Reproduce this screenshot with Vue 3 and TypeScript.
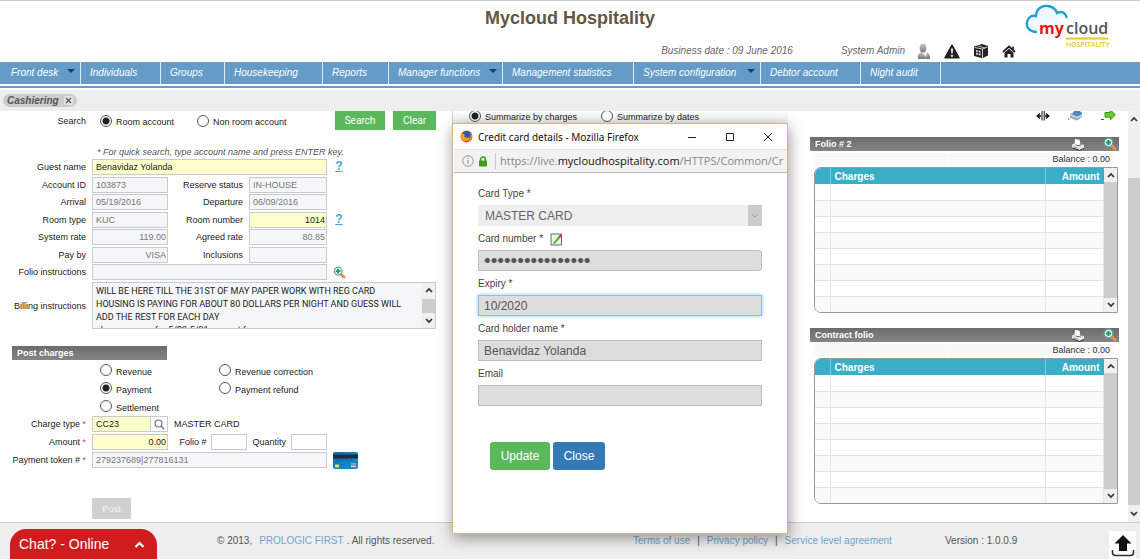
<script setup lang="ts">
import { ref } from 'vue'

interface NavItem { label: string; width: number; menu?: boolean }

const nav: NavItem[] = [
  { label: 'Front desk', width: 81, menu: true },
  { label: 'Individuals', width: 80 },
  { label: 'Groups', width: 64 },
  { label: 'Housekeeping', width: 98 },
  { label: 'Reports', width: 66 },
  { label: 'Manager functions', width: 114, menu: true },
  { label: 'Management statistics', width: 131 },
  { label: 'System configuration', width: 127, menu: true },
  { label: 'Debtor account', width: 100 },
  { label: 'Night audit', width: 80 },
]

const accountKind = ref('room')
const summary = ref('charges')
const postKind = ref('payment')
const postKinds = [
  { id: 'revenue', label: 'Revenue' },
  { id: 'correction', label: 'Revenue correction' },
  { id: 'payment', label: 'Payment' },
  { id: 'refund', label: 'Payment refund' },
  { id: 'settlement', label: 'Settlement' },
]
const details = [
  [
    { id: 'account', label: 'Account ID', value: '103873', cls: '' },
    { id: 'reserve', label: 'Reserve status', value: 'IN-HOUSE', cls: '' },
  ],
  [
    { id: 'arrival', label: 'Arrival', value: '05/19/2016', cls: '' },
    { id: 'departure', label: 'Departure', value: '06/09/2016', cls: '' },
  ],
  [
    { id: 'roomtype', label: 'Room type', value: 'KUC', cls: '' },
    { id: 'roomno', label: 'Room number', value: '1014', cls: 'num key' },
  ],
  [
    { id: 'sysrate', label: 'System rate', value: '119.00', cls: 'num' },
    { id: 'agreed', label: 'Agreed rate', value: '80.85', cls: 'num' },
  ],
  [
    { id: 'payby', label: 'Pay by', value: 'VISA', cls: 'num' },
    { id: 'inclusions', label: 'Inclusions', value: '', cls: '' },
  ],
]
const billing = `WILL BE HERE TILL THE 31ST OF MAY PAPER WORK WITH REG CARD
HOUSING IS PAYING FOR ABOUT 80 DOLLARS PER NIGHT AND GUESS WILL
ADD THE REST FOR EACH DAY
charges came for 5/29-5/31 exempt for`
const folios = ['Folio # 2', 'Contract folio']
</script>

<template>
  <div class="page">
    <svg class="defs" aria-hidden="true">
      <defs>
        <linearGradient id="grey" x1="0" y1="0" x2="0" y2="1"><stop offset="0" stop-color="#c9c9c9" /><stop offset="1" stop-color="#777" /></linearGradient>
        <linearGradient id="blue" x1="0" y1="0" x2="1" y2="1"><stop offset="0" stop-color="#0f6cb0" /><stop offset="1" stop-color="#1593cf" /></linearGradient>
        <symbol id="chev-up" viewBox="0 0 8 6"><path d="M1 5 4 2 7 5" fill="none" stroke="#333" stroke-width="1.7" /></symbol>
        <symbol id="chev-down" viewBox="0 0 8 6"><path d="M1 1 4 4 7 1" fill="none" stroke="#333" stroke-width="1.7" /></symbol>
        <symbol id="zoom-in" viewBox="0 0 14 14">
          <path d="m8 8 4 4" stroke="#e5963a" stroke-width="3" stroke-linecap="round" />
          <circle cx="5.500" cy="5.500" r="4.300" fill="#d9f3ea" stroke="#6f9cab" stroke-width="1.200" />
          <path d="M5.500 3v5M3 5.500h5" stroke="#1f9d45" stroke-width="2" />
        </symbol>
        <symbol id="printer" viewBox="0 0 14 13">
          <path d="m1 6.500 4-1.500 8 2v3L8.500 12 1 9.500z" fill="#e4e4e4" />
          <path d="m3.500 6.500.5-5.500 4.500.8 1 5-3 1z" fill="#fff" />
          <path d="m4.500 6.800 2.500.9 3.500-1" fill="none" stroke="#555" stroke-width=".9" />
          <path d="m1.500 10 7 2.400L13 10.500" fill="none" stroke="#3d3d3d" />
          <path d="m2.500 8.800 4.500 1.500" stroke="#8a8a8a" stroke-width=".8" />
        </symbol>
      </defs>
    </svg>

    <header class="top">
      <h1>Mycloud Hospitality</h1>
      <div class="top-right">
        <div class="status">
          <span class="date">Business date : 09 June 2016</span>
          <span class="admin">System Admin</span>
          <svg width="14" height="17" viewBox="0 0 14 17">
            <path d="M1 16c-.8-4 .8-6.500 4-7h4c3 .5 4.500 3 4 7z" fill="url(#grey)" />
            <ellipse cx="6" cy="5" rx="3.300" ry="4.500" fill="url(#grey)" />
            <path d="M5 9.500 9 14l1-5" fill="#eee" />
          </svg>
          <svg class="gap" width="16" height="15" viewBox="0 0 16 15">
            <path d="M8 1.200 15 13.800H1z" fill="#222" stroke="#222" stroke-width="1.500" stroke-linejoin="round" />
            <path d="M7 4.500h2l-.4 5H7.400z" fill="#fff" /><circle cx="8" cy="11.800" r="1.100" fill="#fff" />
          </svg>
          <svg class="gap" width="16" height="16" viewBox="0 0 16 16">
            <path d="m1 3.500 8-2.500 6 2v9.500l-5.500 2.800L1 13z" fill="#222" />
            <path d="M1.500 4.500 9.500 6 14.500 4M9.500 6v9" fill="none" stroke="#ddd" stroke-width=".9" />
            <path d="M4.500 2.800 12 5" stroke="#ddd" stroke-width=".8" />
            <path d="M3 7v4.500l4.500 1V8z" fill="#ddd" /><path d="M3 9.300l4.500.8M5.200 7v5.500" fill="none" stroke="#222" stroke-width=".9" />
          </svg>
          <svg class="gap" width="14" height="13" viewBox="0 0 14 13">
            <path d="M1 7 7 1.500 13 7M11 1.500v3" fill="none" stroke="#222" stroke-width="1.700" />
            <path d="m2.500 7.800 4.500-4 4.500 4V12.500H8.500V9h-3v3.500h-3z" fill="#222" />
          </svg>
        </div>
        <svg class="logo" width="86" height="46" viewBox="0 0 86 46">
          <path d="M11 29C4 28.500 1 24 2 19s5-7 9-6c0-7 6-11 12-10 5 1 8 3 9 7 4-2 8-1 9.500 4" fill="#eef8fd" stroke="#1ea0dc" stroke-width="2.400" stroke-linecap="round" />
          <text x="14" y="31" class="logo-my">my</text>
          <text x="41" y="31" class="logo-cloud">cloud</text>
          <path d="M41 35.500h42" stroke="#f6c21c" stroke-width="2" />
          <text x="41" y="44" class="logo-sub">HOSPITALITY</text>
        </svg>
      </div>
    </header>

    <nav class="nav">
      <a v-for="n in nav" :key="n.label" href="#" :style="{ width: n.width + 'px' }">
        {{ n.label }}<i v-if="n.menu" class="caret"></i>
      </a>
    </nav>
    <div class="tabs">
      <span class="tab">Cashiering
        <button type="button" aria-label="Close tab">
          <svg width="9" height="9" viewBox="0 0 9 9"><path d="m2 2 5 5m0-5-5 5" stroke="#555" stroke-width="1.200" /></svg>
        </button>
      </span>
    </div>

    <main class="main">
      <section class="left">
        <div class="searchrow">
          <span class="search-label">Search</span>
          <label class="opt"><input v-model="accountKind" type="radio" name="acc" value="room" /><span>Room account</span></label>
          <label class="opt"><input v-model="accountKind" type="radio" name="acc" value="non" /><span>Non room account</span></label>
          <div class="search-buttons">
            <button type="button" class="go wide">Search</button>
            <button type="button" class="go">Clear</button>
          </div>
        </div>
        <p class="hint">* For quick search, type account name and press ENTER key.</p>

        <div class="grid">
          <label for="guest">Guest name</label>
          <input id="guest" class="key long dark" value="Benavidaz Yolanda" />
          <a class="help" href="#">?</a>
          <template v-for="(row, i) in details" :key="i">
            <template v-for="f in row" :key="f.id">
              <label :for="f.id">{{ f.label }}</label>
              <input :id="f.id" :class="f.cls" :value="f.value" />
            </template>
            <a v-if="i === 2" class="help" href="#">?</a>
            <span v-else></span>
          </template>
          <label for="folio-i">Folio instructions</label>
          <input id="folio-i" class="long" value="" />
          <svg class="mag" width="13" height="13"><use href="#zoom-in" /></svg>
        </div>
        <div class="billing">
          <label for="billing">Billing instructions</label>
          <div class="memo">
            <textarea id="billing" :value="billing" wrap="off"></textarea>
            <div class="bar">
              <svg width="8" height="6"><use href="#chev-up" /></svg>
              <i class="thumb"></i>
              <svg width="8" height="6"><use href="#chev-down" /></svg>
            </div>
          </div>
        </div>

        <h2 class="strip post-title">Post charges</h2>
        <div class="kinds">
          <label v-for="k in postKinds" :key="k.id" class="opt">
            <input v-model="postKind" type="radio" name="post" :value="k.id" /><span>{{ k.label }}</span>
          </label>
        </div>
        <div class="grid post">
          <label for="ctype">Charge type <b>*</b></label>
          <div class="combo">
            <input id="ctype" class="key dark" value="CC23" />
            <button type="button" aria-label="Find charge type">
              <svg width="11" height="11" viewBox="0 0 11 11"><circle cx="4.500" cy="4.500" r="3.500" fill="none" stroke="#777" stroke-width="1.200" /><path d="m7 7 3.200 3.200" stroke="#777" stroke-width="1.500" /></svg>
            </button>
          </div>
          <span class="card-name">MASTER CARD</span>
          <span></span>
          <label for="amount">Amount <b>*</b></label>
          <input id="amount" class="key num" value="0.00" />
          <div class="pair">
            <label for="folio">Folio #</label><input id="folio" class="plain" value="" />
            <label for="qty">Quantity</label><input id="qty" class="plain" value="" />
          </div>
          <span></span>
          <label for="token">Payment token # <b>*</b></label>
          <input id="token" class="long" value="279237689|277816131" />
          <svg width="25" height="17" viewBox="0 0 25 17">
            <rect width="25" height="17" rx="2" fill="url(#blue)" />
            <path d="M0 2.500h25v4H0z" fill="#1d2c3b" />
            <path d="M3 8h18" stroke="#0b5288" stroke-width=".8" stroke-dasharray="2 1" />
            <path d="M2 12.500h4v3H2z" fill="#d8ee4a" /><path d="M18 11.500h5v3.500h-5z" fill="#d8cfdc" /><path d="M18 13h5" stroke="#6b4f74" />
          </svg>
        </div>
        <button type="button" class="post-btn" disabled>Post</button>
      </section>

      <section class="middle">
        <div class="sumrow">
          <label class="opt"><input v-model="summary" type="radio" name="sum" value="charges" /><span>Summarize by charges</span></label>
          <label class="opt"><input v-model="summary" type="radio" name="sum" value="dates" /><span>Summarize by dates</span></label>
        </div>
      </section>

      <section class="right">
        <div class="tools">
          <svg width="14" height="10" viewBox="0 0 14 10"><path d="M5 5H1m3-2.500L1.200 5 4 7.500M9 5h4m-3-2.500L12.800 5 10 7.500" fill="none" stroke="#111" stroke-width="1.400" /><path d="M6 0v9.500M8.300 0v9.500" stroke="#555" stroke-width="1.400" /></svg>
          <svg width="15" height="10" viewBox="0 0 15 10"><path d="m2 3.500 4-3 8 .5v4.500L9 9.500 2 7z" fill="#9aa9b6" /><path d="m6 0 6 0 2 3.500L9 5.500 5 3z" fill="#4a88c8" /><path d="m2 4 7 2.500L14 4" fill="none" stroke="#e6ecf2" /><path d="M0 8h1.500" stroke="#555" /></svg>
          <svg width="15" height="10" viewBox="0 0 15 10"><path d="M4 1.500h5V0h1.500l4 3.800L9.500 8.800V6.200H4z" fill="#5fce2a" stroke="#2c8a12" stroke-width=".9" /><path d="M0 8.500h3" stroke="#555" /></svg>
        </div>
        <article v-for="title in folios" :key="title" class="folio">
          <h2 class="strip">
            <span>{{ title }}</span>
            <svg width="14" height="13"><use href="#printer" /></svg>
            <svg width="14" height="14"><use href="#zoom-in" /></svg>
          </h2>
          <div class="balance"><span></span><span>Balance : 0.00</span></div>
          <div class="tablebox">
            <table>
              <thead><tr><th class="pick"></th><th>Charges</th><th class="amt">Amount</th></tr></thead>
              <tbody><tr v-for="r in 8" :key="r"><td></td><td></td><td></td></tr></tbody>
            </table>
            <div class="bar">
              <svg width="8" height="6"><use href="#chev-up" /></svg>
              <i class="thumb"></i>
              <svg width="8" height="6"><use href="#chev-down" /></svg>
            </div>
          </div>
        </article>
      </section>

      <div class="bar pagebar">
        <svg width="8" height="6"><use href="#chev-up" /></svg>
        <i class="thumb"></i>
        <svg width="8" height="6"><use href="#chev-down" /></svg>
      </div>
    </main>

    <footer class="foot">
      <button type="button" class="chat"><span>Chat? - Online</span>
        <svg width="11" height="7" viewBox="0 0 11 7"><path d="m1.500 6 4-4 4 4" fill="none" stroke="#fff" stroke-width="2.200" /></svg>
      </button>
      <p class="copy"><span>© 2013,</span><a href="#">PROLOGIC FIRST</a><span>. All rights reserved.</span></p>
      <p class="links"><a href="#">Terms of use</a><span>|</span><a href="#">Privacy policy</a><span>|</span><a href="#">Service level agreement</a></p>
      <span class="version">Version : 1.0.0.9</span>
      <button type="button" class="totop" aria-label="Back to top">
        <svg width="24" height="24" viewBox="0 0 24 24"><path d="m12 2 8.500 8.500H16V18H8v-7.500H3.500z" fill="#111" /><path d="M1.500 17v2.500q0 3 3 3h15q3 0 3-3V17" fill="none" stroke="#333" stroke-width="1.600" /></svg>
      </button>
    </footer>

    <div class="window" role="dialog" aria-label="Credit card details">
      <div class="titlebar">
        <svg width="13" height="13" viewBox="0 0 13 13">
          <circle cx="6.500" cy="6.500" r="6" fill="#e2601b" /><circle cx="7" cy="5" r="4" fill="#2a5ca8" />
          <path d="M1 3.500c1 1 3-.5 4 1.500-1 .5-1 2 .5 2.500 1.500.5 3-.5 4 .5-1 3-5 4-7.500 1.500C.5 7.500.6 5 1 3.500z" fill="#f7a21b" />
          <path d="M10.500 3c2 3 1 7-2.500 8.500 2-1.500 3.500-4.500 2.500-8.500z" fill="#ffd03c" />
        </svg>
        <span>Credit card details - Mozilla Firefox</span>
        <button type="button" aria-label="Minimize"><svg width="10" height="10"><path d="M1 5.500h8" stroke="#222" /></svg></button>
        <button type="button" aria-label="Maximize"><svg width="10" height="10"><path d="M1.500 1.500h7v7h-7z" fill="none" stroke="#222" /></svg></button>
        <button type="button" aria-label="Close window"><svg width="10" height="10"><path d="m1 1 8 8m0-8-8 8" stroke="#222" /></svg></button>
      </div>
      <div class="urlbar">
        <svg width="12" height="12" viewBox="0 0 12 12"><circle cx="6" cy="6" r="5.300" fill="none" stroke="#999" /><path d="M6 5v4M6 2.800v1.200" stroke="#888" /></svg>
        <svg width="10" height="11" viewBox="0 0 10 11"><path d="M2.500 5V3.500a2.500 2.500 0 0 1 5 0V5" fill="none" stroke="#3f9b1e" stroke-width="1.500" /><rect x="1" y="4.500" width="8" height="6" rx=".8" fill="#3f9b1e" /></svg>
        <span class="url">https://live.<b>mycloudhospitality.com</b>/HTTPS/Common/Cr</span>
      </div>
      <form class="card" @submit.prevent>
        <label for="ctype2">Card Type *</label>
        <div class="selectbox">
          <select id="ctype2"><option>MASTER CARD</option></select>
          <span><svg width="8" height="6" viewBox="0 0 8 6"><path d="m1 1 3 3 3-3" fill="none" stroke="#999" /></svg></span>
        </div>
        <label for="cnum">Card number *
          <svg width="13" height="13" viewBox="0 0 13 13"><path d="M1 1h10.500v11H1z" fill="#eaf5ea" stroke="#5d6f7c" /><path d="m3.500 9.500 5-6 1.500 1.500-5 5.500-2 .5z" fill="#46b335" /><path d="m8.500 3.500 2-2.500 1.500 1.500L10 5z" fill="#c8382c" /></svg>
        </label>
        <input id="cnum" type="password" value="5412751234567890" class="rounded" autocomplete="off" />
        <label for="expiry">Expiry *</label>
        <input id="expiry" value="10/2020" class="active" />
        <label for="holder">Card holder name *</label>
        <input id="holder" value="Benavidaz Yolanda" />
        <label for="email">Email</label>
        <input id="email" value="" />
        <div class="actions">
          <button type="submit" class="update">Update</button>
          <button type="button" class="close">Close</button>
        </div>
      </form>
    </div>
  </div>
</template>

<style>
body { background: #fff; }
</style>

<style scoped>
* { box-sizing: border-box; }
.page { position: relative; display: flex; flex-direction: column; min-height: 100vh; overflow: hidden; font: 9px/12px "Liberation Sans", Arial, sans-serif; color: #222; }
.defs { position: absolute; width: 0; height: 0; }
h1, h2, p { margin: 0; }
svg { display: block; flex: none; }
a { color: #6fa5cf; text-decoration: none; }
button { font: inherit; border: 0; padding: 0; margin: 0; }
input, textarea, select { font: inherit; margin: 0; min-width: 0; }

.top { display: grid; grid-template-columns: 1fr auto 1fr; height: 62px; border-top: 1px solid #ccc; }
.top h1 { grid-column: 2; font-size: 18px; line-height: 22px; padding-top: 6px; color: #655643; }
.top-right { display: flex; justify-content: flex-end; align-items: flex-start; padding-right: 29px; }
.status { display: flex; align-items: center; height: 20px; margin-top: 40px; font-size: 10px; font-style: italic; color: #666; white-space: nowrap; }
.date { margin-right: 48px; }
.admin { margin-right: 12px; }
.gap { margin-left: 13px; }
.logo { margin: 2px 0 0 9px; }
.logo-my { font: bold 16px "Open Sans", sans-serif; fill: #e3171f; }
.logo-cloud { font: 600 16px "Open Sans", sans-serif; fill: #555; }
.logo-sub { font: 600 7px "Open Sans", sans-serif; fill: #f6c21c; }

.nav { display: flex; height: 22px; background: #649bc7; }
.nav a { display: flex; justify-content: space-between; padding: 0 5px 0 9px; border-right: 1px solid #dfeaf4; color: #fff; font-size: 10px; font-style: italic; line-height: 22px; white-space: nowrap; flex: none; }
.nav a:first-child { padding-left: 11px; }
.caret { margin-top: 7px; width: 0; height: 0; border: 4px solid transparent; border-top-color: #0c3f86; border-bottom: 0; }
.tabs { margin-top: 2px; border-top: 2px solid #649bc7; height: 25px; padding: 6px 3px 0; background: linear-gradient(#fff 2px, #eee 2px); display: flex; align-items: flex-start; }
.tab { display: flex; align-items: center; gap: 5px; height: 13px; padding: 0 4px; border-radius: 7px; background: #ccc; font: italic bold 10px/13px "Liberation Sans", Arial, sans-serif; color: #555; }
.tab button { background: #e4e4e4; border-radius: 2px; }

.main { flex: 1; display: grid; grid-template-columns: 452px 1fr 340px 12px; }
.left { padding-bottom: 3px; }
.opt { display: flex; align-items: center; gap: 4px; color: #222; white-space: nowrap; }
.opt span { padding-top: 3px; }
.opt input { appearance: none; width: 12px; height: 12px; border: 1px solid #555; border-radius: 50%; background: #fff; flex: none; }
.opt input:checked { background: radial-gradient(circle, #222 0 3px, #fff 4px); }
.searchrow { display: grid; grid-template-columns: 86px 97px 152px auto; height: 19px; align-items: center; }
.search-label { text-align: right; }
.searchrow .opt { margin-left: 14px; }
.search-buttons { display: flex; gap: 8px; }
.go { width: 43px; height: 19px; background: #5cb85c; color: #fff; font-size: 10px; font-family: Roboto, sans-serif; }
.go.wide { width: 50px; }
.hint { margin-top: 16px; padding-left: 97px; height: 13px; font-style: italic; color: #555; line-height: 13px; }

.grid { display: grid; grid-template-columns: 86px 76px 69px 78px auto; grid-template-rows: repeat(3, 18px 17px) 18px; column-gap: 6px; align-items: start; }
.grid label, .billing label { text-align: right; line-height: 16px; white-space: nowrap; }
.grid input { width: 100%; height: 16px; padding: 0 3px; border: 1px solid #c5cbd0; border-radius: 0; background: #f5f6f8; color: #777; }
.grid .long { grid-column: 2 / 5; }
.grid .dark { color: #222; }
.grid .num { text-align: right; padding-right: 1px; }
.grid .key { background: #ffffcb; color: #222; }
.grid .plain { background: #fff; width: 36px; }
.help { font: bold 12px/14px "Liberation Sans", Arial, sans-serif; color: #45a5d6; text-decoration: underline; width: 12px; text-align: center; }
.mag { margin-top: 2px; }
.billing { display: grid; grid-template-columns: 86px 344px; column-gap: 6px; align-items: center; }
.memo { display: flex; height: 47px; border: 1px solid #c5cbd0; background: #f5f6f8; }
.memo textarea { flex: 1; resize: none; border: 0; padding: 2px 3px 0; overflow: hidden; background: transparent; font: 9px/13px Roboto, "Liberation Sans", sans-serif; color: #222; white-space: pre; }
.bar { display: flex; flex-direction: column; align-items: center; justify-content: space-between; width: 13px; background: #f0f0f0; padding: 4px 0; }
.bar .thumb { width: 100%; height: 14px; background: #cdcdcd; }

.strip { display: flex; align-items: center; height: 14px; padding: 0 2px 0 5px; background: linear-gradient(#6c6c6c, #858585); color: #fff; font-size: 9px; line-height: 14px; }
.post-title { width: 155px; margin: 17px 0 0 12px; }
.kinds { display: grid; grid-template-columns: 119px auto; grid-auto-rows: 18px; justify-content: start; padding: 1px 0 1px 100px; }
.post { grid-template-rows: 18px 18px 18px; }
.post b { color: #e33; font-weight: normal; }
.post .pair { grid-column: 3 / 5; display: flex; gap: 5px; justify-content: flex-end; }
.post .card-name { grid-column: 3 / 5; line-height: 16px; }
.combo { display: flex; }
.combo button { width: 17px; flex: none; height: 16px; border: 1px solid #c5cbd0; border-left: 0; background: #fff; display: grid; place-items: center; }
.post-btn { margin: 28px 0 0 92px; width: 39px; height: 21px; background: #d0d0d0; color: #f5f5f5; }

.middle { border-left: 1px solid #ccc; }
.sumrow { display: flex; align-items: flex-end; gap: 24px; height: 12px; overflow: hidden; padding-left: 16px; background: linear-gradient(#fff, #eee); }
.sumrow .opt { flex: none; height: 15px; }

.right { padding: 0 9px 0 22px; }
.tools { display: flex; justify-content: flex-end; gap: 18px; height: 26px; padding-right: 3px; }
.folio + .folio { margin-top: 15px; }
.strip span { flex: 1; }
.folio .strip svg + svg { margin-left: 18px; }
.balance { display: flex; justify-content: space-between; margin: 2px 5px; height: 12px; background: #f8f8f8; padding-right: 4px; color: #333; }
.balance span:first-child { width: 134px; border-right: 1px solid #fff; }
.tablebox { display: flex; margin: 0 1px 0 4px; border: 1px solid #999; border-radius: 7px 0 0 7px; overflow: hidden; }
table { flex: 1; border-collapse: collapse; table-layout: fixed; }
th { height: 16px; padding: 0 4px; background: #39aec6; color: #fff; text-align: left; font: bold 10px/15px "Liberation Sans", Arial, sans-serif; border-right: 1px solid #7ecbda; }
th.pick { width: 15px; }
th.amt { width: 58px; text-align: right; border-right: 0; }
td { height: 16px; padding: 0; border-right: 1px solid #e6e6e6; border-bottom: 1px solid #e2e2e2; }
tr:last-child td { border-bottom: 0; }
tbody tr:nth-child(even) { background: #fafafa; }
.tablebox .thumb, .pagebar .thumb { flex: 1; margin: 4px 0; }
.pagebar { width: 12px; padding: 5px 0; }
.pagebar .thumb { margin: 56px 0 6px; }

.foot { display: grid; grid-template-columns: 217px 416px 312px auto 31px; height: 37px; border-top: 1px solid #ccc; background: #eee; font-size: 10px; color: #555; line-height: 36px; }
.chat { display: flex; align-items: center; justify-content: space-between; width: 147px; height: 30px; margin: 6px 0 0 10px; padding: 0 12px 0 9px; border-radius: 16px 16px 0 0; background: #d01c1c; color: #fff; font-size: 14px; line-height: 30px; }
.copy { display: flex; gap: 7px; }
.copy span:last-child { margin-left: -4px; }
.links { display: flex; gap: 7px; }
.totop { width: 27px; height: 28px; margin-top: 8px; background: #fff; display: grid; place-items: center; }

.window { position: absolute; left: 452px; top: 123px; width: 336px; height: 411px; background: #fff; border: 1px solid #d9b193; box-shadow: 1px 4px 14px rgba(0, 0, 0, .4); display: flex; flex-direction: column; }
.titlebar { display: flex; align-items: center; height: 25px; padding: 0 14px 0 7px; font: 10px/24px "Noto Sans", "Open Sans", sans-serif; color: #111; }
.titlebar span { flex: 1; padding-left: 5px; white-space: nowrap; }
.titlebar button { background: none; margin-left: 28px; }
.urlbar { display: flex; align-items: center; gap: 4px; height: 24px; margin-left: 1px; padding: 0 4px 0 8px; background: #f2f2f2; border-top: 1px solid #e4e4e4; border-bottom: 1px solid #bbb; }
.url { flex: 1; margin-left: 3px; padding-left: 4px; border-left: 1px solid #ccc; white-space: nowrap; font: 11px/16px "Open Sans", "Noto Sans", sans-serif; color: #888; }
.url b { font-weight: normal; color: #111; }
.card { display: flex; flex-direction: column; padding: 14px 25px 0; color: #444; }
.card label { display: flex; align-items: center; gap: 7px; height: 14px; margin-bottom: 4px; font-size: 10px; }
.card > input, .selectbox { height: 21px; margin-bottom: 6px; font-size: 12px; }
.card > input { padding: 0 5px; border: 1px solid #bbb; border-radius: 0; background: #ddd; color: #555; outline: 0; }
.card .rounded { border-radius: 0 3px 3px 0; font-size: 19px; }
.card .active { border-color: #8fbfe8; box-shadow: 0 0 4px #8cc4f0; }
.selectbox { display: flex; background: #eee; }
.selectbox select { flex: 1; appearance: none; border: 0; background: none; padding: 0 7px; color: #666; }
.selectbox span { width: 14px; background: #ccc; display: grid; place-items: center; }
.actions { display: flex; gap: 3px; margin: 30px 0 0 12px; }
.actions button { height: 28px; border-radius: 3px; color: #fff; font-size: 12px; }
.update { width: 60px; background: #5cb85c; }
.close { width: 52px; background: #337ab7; }
</style>
